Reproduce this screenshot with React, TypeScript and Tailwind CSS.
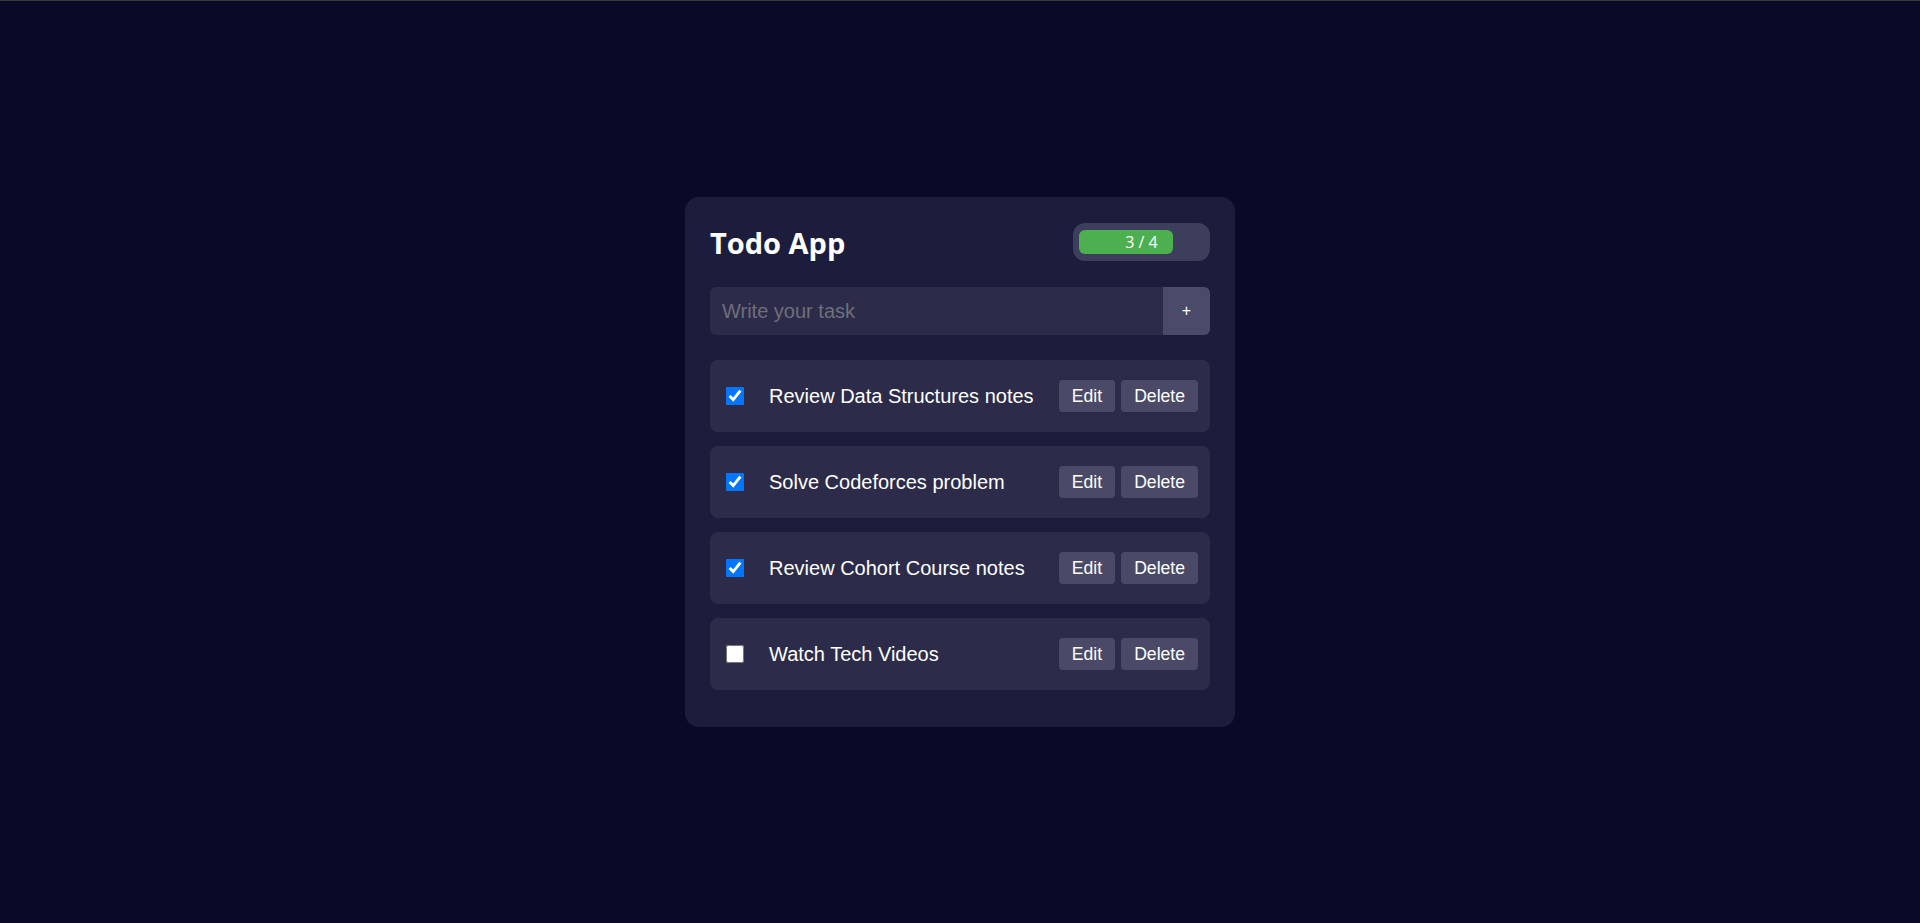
import React from 'react';

type Task = {
  id: number;
  text: string;
  done: boolean;
};

const initialTasks: Task[] = [
  { id: 1, text: 'Review Data Structures notes', done: true },
  { id: 2, text: 'Solve Codeforces problem', done: true },
  { id: 3, text: 'Review Cohort Course notes', done: true },
  { id: 4, text: 'Watch Tech Videos', done: false },
];

const App: React.FC = () => {
  const [tasks, setTasks] = React.useState<Task[]>(initialTasks);
  const [draft, setDraft] = React.useState('');

  const doneCount = tasks.filter(t => t.done).length;
  const percent = tasks.length ? (doneCount / tasks.length) * 100 : 0;

  const toggle = (id: number) => {
    setTasks(prev => prev.map(t => (t.id === id ? { ...t, done: !t.done } : t)));
  };

  const remove = (id: number) => {
    setTasks(prev => prev.filter(t => t.id !== id));
  };

  const add = () => {
    if (!draft.trim()) return;
    setTasks(prev => [...prev, { id: Date.now(), text: draft.trim(), done: false }]);
    setDraft('');
  };

  return (
    <div className="h-screen w-full bg-[#080a28] border-t border-[#3a3a3a] flex items-center justify-center">
      <div className="w-[550px] rounded-[14px] bg-[#1c1c3c] p-[25px]">
        {/* header */}
        <div className="h-[40px] mb-[25px] flex items-center justify-between">
          <h1 className="text-[29px] font-bold text-white leading-none font-['Open_Sans',sans-serif]">
            Todo App
          </h1>
          <div className="w-[137px] h-[38px] rounded-[12px] bg-[#3d3d5c] px-[6px] py-[7px]">
            <div className="relative h-full w-full">
              <div
                className="h-full rounded-[6px] bg-[#4caf50]"
                style={{ width: `${percent}%` }}
              />
              <span className="absolute inset-0 flex items-center justify-center text-[16px] text-white font-['Open_Sans',sans-serif]">
                {doneCount} / {tasks.length}
              </span>
            </div>
          </div>
        </div>

        {/* input */}
        <div className="flex h-[48px] mb-[25px]">
          <input
            className="flex-1 min-w-0 rounded-l-[6px] bg-[#2c2c4a] px-[12px] text-[20px] text-white placeholder-[#6f6f7a] outline-none font-['Liberation_Sans',Arial,sans-serif]"
            placeholder="Write your task"
            value={draft}
            onChange={e => setDraft(e.target.value)}
          />
          <button
            className="w-[47px] rounded-r-[6px] bg-[#4a4a6a] text-white text-[16px] font-['Liberation_Sans',Arial,sans-serif]"
            onClick={add}
          >
            +
          </button>
        </div>

        {/* list */}
        <div className="flex flex-col gap-[14px] pb-[12px]">
          {tasks.map(task => (
            <div
              key={task.id}
              className="h-[72px] rounded-[8px] bg-[#2c2c4a] pl-[16px] pr-[12px] flex items-center"
            >
              <input
                type="checkbox"
                className="w-[18px] h-[18px] m-0 shrink-0"
                checked={task.done}
                onChange={() => toggle(task.id)}
              />
              <span className="ml-[25px] flex-1 text-[20px] text-white font-['Liberation_Sans',Arial,sans-serif]">
                {task.text}
              </span>
              <div className="flex gap-[6px]">
                <button className="rounded-[4px] bg-[#4a4a68] px-[13px] py-[6px] text-[17.6px] leading-[20.5px] text-white font-['Liberation_Sans',Arial,sans-serif]">
                  Edit
                </button>
                <button
                  className="rounded-[4px] bg-[#4a4a68] px-[13px] py-[6px] text-[17.6px] leading-[20.5px] text-white font-['Liberation_Sans',Arial,sans-serif]"
                  onClick={() => remove(task.id)}
                >
                  Delete
                </button>
              </div>
            </div>
          ))}
        </div>
      </div>
    </div>
  );
};

export default App;
